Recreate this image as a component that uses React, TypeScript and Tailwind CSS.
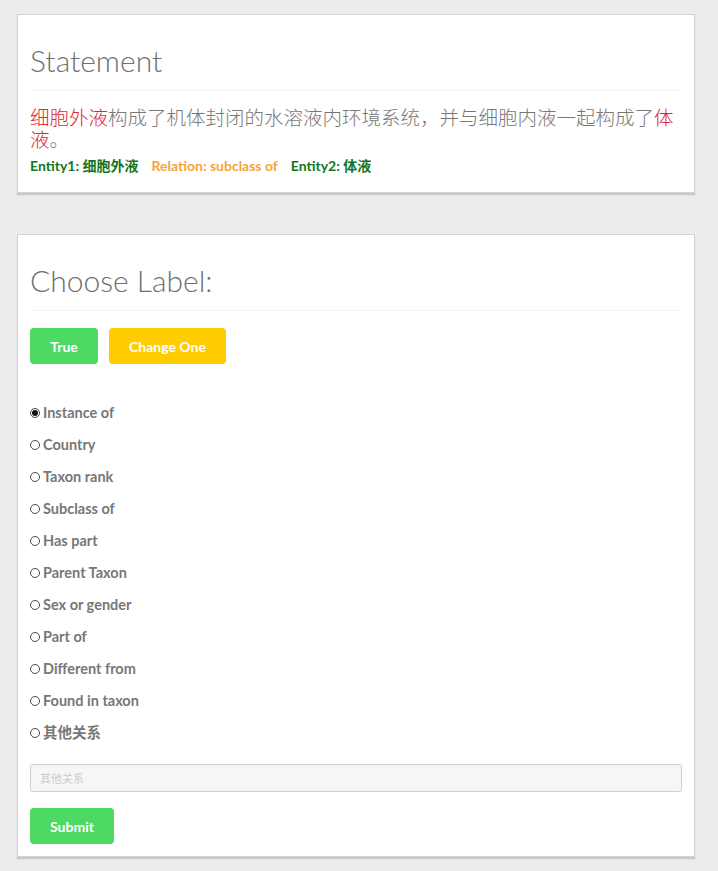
import { useState } from "react";

const labels = [
  "Instance of",
  "Country",
  "Taxon rank",
  "Subclass of",
  "Has part",
  "Parent Taxon",
  "Sex or gender",
  "Part of",
  "Different from",
  "Found in taxon",
  "其他关系",
];

const font = "font-['Lato','Noto_Sans_CJK_SC',sans-serif]";

export default function App() {
  const [choice, setChoice] = useState("Instance of");

  return (
    <div className={`min-h-[871px] bg-[#ececec] px-[17px] pt-[14px] ${font}`}>
      {/* Statement */}
      <section className="w-[678px] border border-[#d4d4d4] bg-white px-[12px] pb-[17px] pt-[29px] shadow-[0_2px_1px_rgba(0,0,0,0.15)]">
        <h3 className="border-b border-[#f2f2f2] pb-[13px] text-[30px] font-light leading-[33px] text-[#6f6f6f]">
          Statement
        </h3>
        <p className="mt-[16px] text-[19.5px] font-light leading-[22px] text-[#777]">
          <span className="text-[#e0262e]">细胞外液</span>
          构成了机体封闭的水溶液内环境系统，并与细胞内液一起构成了
          <span className="text-[#e0262e]">体液</span>。
        </p>
        <div className="mt-[6px] flex gap-[13px] text-[14px] font-bold leading-[18px]">
          <span className="text-[#13761e]">Entity1: 细胞外液</span>
          <span className="text-[#f4a53a]">Relation: subclass of</span>
          <span className="text-[#13761e]">Entity2: 体液</span>
        </div>
      </section>

      {/* Choose label */}
      <section className="mt-[41px] w-[678px] border border-[#d4d4d4] bg-white px-[12px] pb-[12px] pt-[29px] shadow-[0_2px_1px_rgba(0,0,0,0.15)]">
        <h3 className="border-b border-[#f2f2f2] pb-[13px] text-[30px] font-light leading-[33px] text-[#6f6f6f]">
          Choose Label:
        </h3>
        <div className="mt-[17px] flex gap-[11px]">
          <button className="h-[36px] w-[68px] rounded-[4px] bg-[#4cd964] text-[14px] font-bold text-white">
            True
          </button>
          <button className="h-[36px] w-[117px] rounded-[4px] bg-[#ffcc00] text-[14px] font-bold text-white">
            Change One
          </button>
        </div>

        <div className="mt-[33px] flex flex-col">
          {labels.map((l) => (
            <label key={l} className="flex h-[32px] cursor-pointer items-center gap-[3px] text-[14.5px] font-bold text-[#777]">
              <span className="flex h-[10px] w-[10px] items-center justify-center rounded-full border border-[#444] bg-white">
                {choice === l && <span className="h-[6px] w-[6px] rounded-full bg-[#111]" />}
              </span>
              <input
                type="radio"
                name="label"
                className="hidden"
                checked={choice === l}
                onChange={() => setChoice(l)}
              />
              {l}
            </label>
          ))}
        </div>

        <input
          type="text"
          placeholder="其他关系"
          className="mt-[15px] block h-[28px] w-full rounded-[3px] border border-[#cfcfcf] bg-[#f6f6f6] px-[9px] text-[11px] text-[#555] outline-none placeholder:text-[#cccccc]"
        />

        <button className="mt-[16px] h-[36px] w-[84px] rounded-[4px] bg-[#4cd964] text-[14px] font-bold text-white">
          Submit
        </button>
      </section>
    </div>
  );
}
